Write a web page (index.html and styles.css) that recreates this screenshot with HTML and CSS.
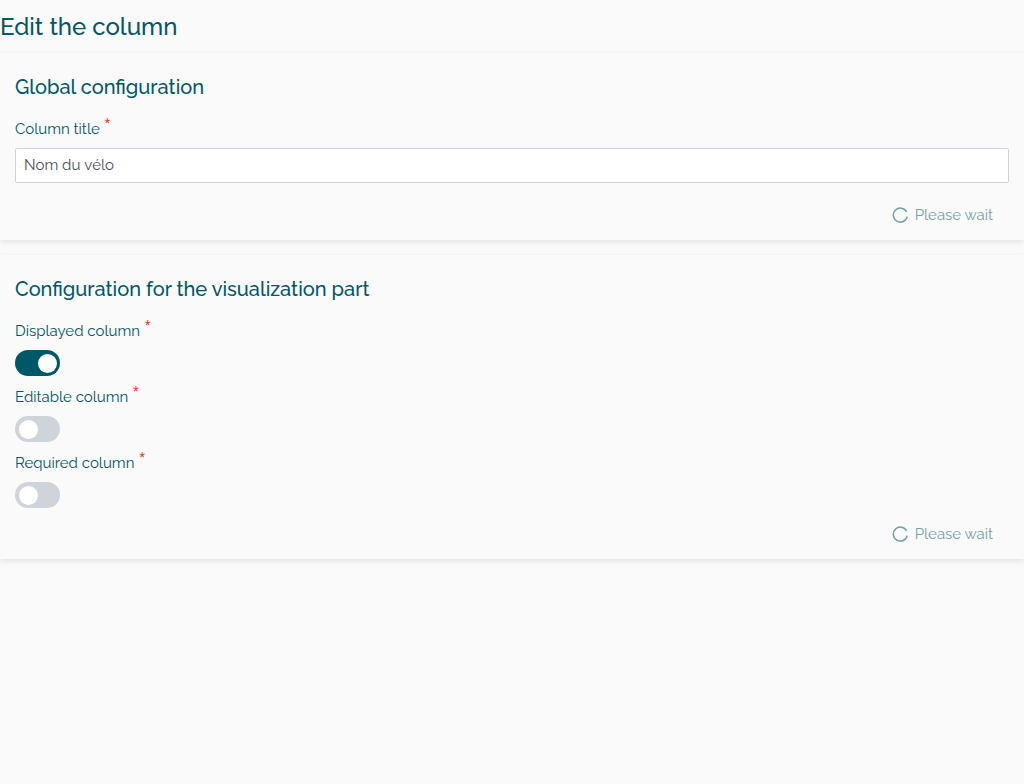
FILE: index.html
```html
<!DOCTYPE html>
<html lang="en">
<head>
<meta charset="utf-8">
<title>Edit the column</title>
<link rel="stylesheet" href="styles.css">
</head>
<body>
<main>
  <h1 class="page-title">Edit the column</h1>
  <form class="card">
    <h2 class="card-title">Global configuration</h2>
    <div class="field">
      <label class="label" for="title">Column title <span class="required">*</span></label>
      <input class="text-input" id="title" type="text" value="Nom du vélo" required>
    </div>
    <div class="actions actions-spaced">
      <button class="button" type="submit" disabled>
        <svg class="spinner" viewBox="0 0 16 16" aria-hidden="true"><path d="M14.6 4.9A7 7 0 1 0 15.2 9.6"/></svg>
        <span>Please wait</span>
      </button>
    </div>
  </form>
  <form class="card">
    <h2 class="card-title">Configuration for the visualization part</h2>
    <div class="fields">
      <div class="field">
        <label class="label" for="displayed">Displayed column <span class="required">*</span></label>
        <input class="toggle" id="displayed" type="checkbox" checked>
      </div>
      <div class="field">
        <label class="label" for="editable">Editable column <span class="required">*</span></label>
        <input class="toggle" id="editable" type="checkbox">
      </div>
      <div class="field">
        <label class="label" for="required">Required column <span class="required">*</span></label>
        <input class="toggle" id="required" type="checkbox">
      </div>
    </div>
    <div class="actions">
      <button class="button" type="submit" disabled>
        <svg class="spinner" viewBox="0 0 16 16" aria-hidden="true"><path d="M14.6 4.9A7 7 0 1 0 15.2 9.6"/></svg>
        <span>Please wait</span>
      </button>
    </div>
  </form>
</main>
</body>
</html>
```
FILE: styles.css
```css
* { box-sizing: border-box; }

body {
  margin: 0;
  background: #fafafa;
  color: #005767;
  font: 15px/22px Raleway, Lato, sans-serif;
}

.page-title {
  margin: 0;
  padding: 11px 0 10px;
  font-size: 24px;
  line-height: 32px;
  font-weight: 500;
}

.card {
  margin-bottom: 15px;
  padding: 20px 15px 8px;
  background: #fafafa;
  box-shadow: 0 2px 6px rgba(0, 0, 0, 0.1);
}

.card-title {
  margin: 0 0 17px;
  font-size: 20px;
  line-height: 28px;
  font-weight: 500;
}

.fields {
  display: flex;
  flex-direction: column;
  gap: 10px;
}

.field {
  display: flex;
  flex-direction: column;
  align-items: flex-start;
  gap: 8px;
}

.label {
  display: flex;
  gap: 5px;
}

.required {
  color: #f44336;
  font-family: Roboto, sans-serif;
  font-size: 12px;
  font-weight: 500;
  line-height: 10px;
}

.text-input {
  width: 100%;
  height: 35px;
  padding: 0 8px 2px;
  border: 1px solid #ced4da;
  border-radius: 2px;
  background: #fff;
  color: #495057;
  font: inherit;
  font-kerning: none;
}

.toggle {
  appearance: none;
  display: flex;
  align-items: center;
  width: 45px;
  height: 26px;
  margin: 0;
  padding: 0 3px 0 4px;
  border-radius: 15px;
  background: #ced4da;
}

.toggle::before {
  content: "";
  width: 19px;
  height: 19px;
  border-radius: 50%;
  background: #fff;
}

.toggle:checked {
  justify-content: flex-end;
  background: #005767;
}

.actions {
  display: flex;
  justify-content: flex-end;
  margin-top: 8px;
}

.actions-spaced { margin-top: 14px; }

.button {
  display: flex;
  align-items: center;
  gap: 7px;
  height: 35px;
  padding: 0 16px;
  border: 0;
  background: transparent;
  color: #005767;
  font: inherit;
  opacity: 0.55;
}

.spinner {
  width: 16px;
  height: 16px;
  fill: none;
  stroke: currentColor;
  stroke-width: 1.5;
}
```
